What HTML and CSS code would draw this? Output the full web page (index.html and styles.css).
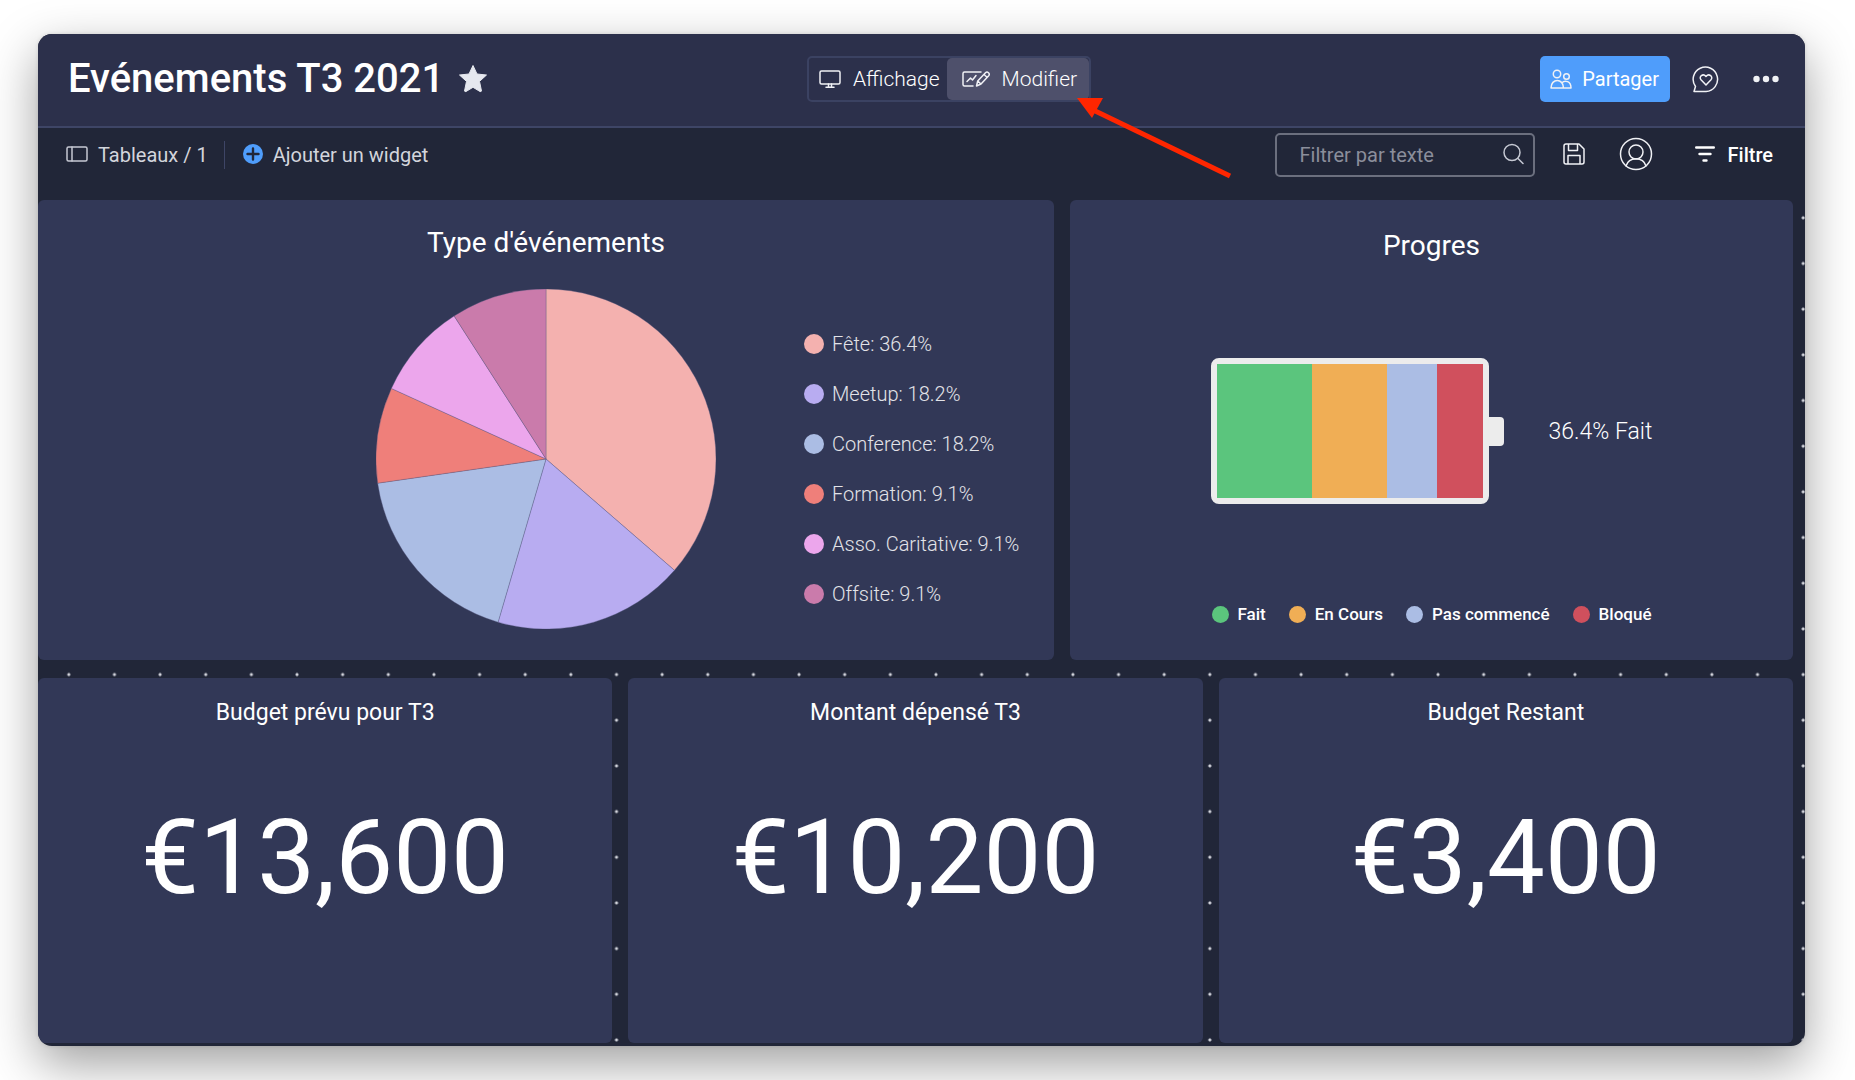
FILE: index.html
```html
<!DOCTYPE html>
<html lang="fr">
<head>
<meta charset="utf-8">
<meta name="viewport" content="width=device-width, initial-scale=1">
<title>Evénements T3 2021</title>
<link rel="stylesheet" href="styles.css">
</head>
<body>
<div class="window">
  <header class="header">
    <div class="heading">
      <h1 class="title">Evénements T3 2021</h1>
      <button class="icon-button" type="button" aria-label="Favori">
        <svg class="star" viewBox="0 0 30 30" width="30" height="30"><path d="M15 1.500l4 8.500 9.500 1-7 6.400 2 9.600q-.5 1-1.500.5l-7-4.200-7 4.200q-1 .5-1.500-.5l2-9.600-7-6.400L11 10z" stroke="#e6e8ef" stroke-linejoin="round"/></svg>
      </button>
    </div>
    <div class="switch">
      <button class="switch-option" type="button">
        <svg class="line-icon" viewBox="0 0 22 20" width="22" height="20"><rect x="1" y="2" width="20" height="13" rx="1.500"/><path d="M9.500 15v2.500M12.500 15v2.500M7 18.200h8"/></svg>
        Affichage
      </button>
      <button class="switch-option is-active" type="button" aria-pressed="true">
        <svg class="line-icon" viewBox="0 0 28 18" width="28" height="18"><path d="M19 2H2.500A1.500 1.500 0 0 0 1 3.500v11A1.500 1.500 0 0 0 2.500 16H11M5 11.500l3.500-3.500 2 2L14 5.500"/><path d="M14.500 16l1.200-5 7.800-8.300a2.200 2.200 0 0 1 3.200 3L19 14zM15.700 11l3.300 3M22 4.500l3 2.800"/></svg>
        Modifier
      </button>
      <svg class="arrow" viewBox="0 0 160 84" width="160" height="84"><path class="arrow-line" d="M14 12L155 80"/><path class="arrow-head" d="M2 2h26L17 22z"/></svg>
    </div>
    <div class="actions">
      <button class="share" type="button">
        <svg class="line-icon" viewBox="0 0 22 20" width="22" height="20"><circle cx="7" cy="5" r="3.700"/><circle cx="16.500" cy="7.500" r="2.800"/><path d="M1 19c0-10 12.500-10 12.500 0zM12 13.700c3-3 9-1.500 9 5.300h-7.500"/></svg>
        Partager
      </button>
      <button class="icon-button" type="button" aria-label="Commentaires">
        <svg class="line-icon" viewBox="0 0 28 28" width="28" height="28"><path d="M2 26.500l1.500-5A12.200 12.200 0 1 1 14 26.500z"/><path d="M14 20l-5-5.200c-2.600-3.200 2-7 5-3.300 3-3.700 7.600.1 5 3.300z"/></svg>
      </button>
      <button class="icon-button" type="button" aria-label="Plus">
        <svg class="solid-icon" viewBox="0 0 26 8" width="26" height="8"><circle cx="3.500" cy="4" r="3.200"/><circle cx="13" cy="4" r="3.200"/><circle cx="22.500" cy="4" r="3.200"/></svg>
      </button>
    </div>
  </header>

  <nav class="toolbar">
    <button class="tool" type="button">
      <svg class="line-icon muted" viewBox="0 0 22 18" width="22" height="18"><rect x="1" y="1" width="20" height="14" rx="1.500"/><path d="M6 1v14"/></svg>
      Tableaux / 1
    </button>
    <button class="tool tool-add" type="button">
      <svg viewBox="0 0 20 22" width="20" height="22"><circle cx="10" cy="10" r="10" fill="#4f9dfb"/><path d="M10 4.500v11M4.500 10h11" stroke="#212638" stroke-width="2.400" stroke-linecap="round"/></svg>
      Ajouter un widget
    </button>
    <div class="search">
      <input class="search-input" type="text" placeholder="Filtrer par texte" aria-label="Filtrer par texte">
      <svg class="line-icon muted" viewBox="0 0 22 24" width="22" height="24"><circle cx="10" cy="9.500" r="8"/><path d="M16 15.500l5 5"/></svg>
    </div>
    <div class="tools-end">
      <button class="icon-button" type="button" aria-label="Enregistrer">
        <svg class="line-icon" viewBox="0 0 22 24" width="22" height="24"><path d="M1 3a2 2 0 0 1 2-2h13l5 5v13a2 2 0 0 1-2 2H3a2 2 0 0 1-2-2zM5.500 1v6.500h9V1M5 21v-8.500h12V21"/></svg>
      </button>
      <button class="icon-button" type="button" aria-label="Profil">
        <svg class="line-icon" viewBox="0 0 34 36" width="34" height="36"><circle cx="17" cy="17" r="15.500"/><circle cx="17" cy="15" r="7"/><path d="M7 29c1.500-5 5-7.300 10-7.300S25.500 24 27 29"/></svg>
      </button>
      <button class="filter" type="button">
        <svg class="filter-icon" viewBox="0 0 20 18" width="20" height="18"><path d="M1.200 1.500h17.600M4.500 8h11M8.500 14.500h3"/></svg>
        Filtre
      </button>
    </div>
  </nav>

  <main class="board">
    <section class="row row-charts">
      <article class="card chart-card">
        <h2 class="card-title">Type d'événements</h2>
        <div class="pie-layout">
          <svg class="pie" viewBox="-171 -171 342 342" width="340" height="340" role="img" aria-label="Type d'événements">
            <path fill="#f4b1af" d="M0 0V-171A171 171 0 0 1 129.200 112z"/>
            <path fill="#b8acf1" d="M0 0L129.200 112A171 171 0 0 1 -48.200 164.100z"/>
            <path fill="#abbde4" d="M0 0L-48.200 164.100A171 171 0 0 1 -169.300 24.300z"/>
            <path fill="#ef7f7a" d="M0 0L-169.300 24.300A171 171 0 0 1 -155.500 -71z"/>
            <path fill="#eca6ec" d="M0 0L-155.500 -71A171 171 0 0 1 -92.400 -143.900z"/>
            <path fill="#ca7bab" d="M0 0L-92.400 -143.900A171 171 0 0 1 0 -171z"/>
          </svg>
          <ul class="pie-legend">
            <li><i class="dot pink"></i>Fête: 36.4%</li>
            <li><i class="dot violet"></i>Meetup: 18.2%</li>
            <li><i class="dot blue"></i>Conference: 18.2%</li>
            <li><i class="dot coral"></i>Formation: 9.1%</li>
            <li><i class="dot orchid"></i>Asso. Caritative: 9.1%</li>
            <li><i class="dot plum"></i>Offsite: 9.1%</li>
          </ul>
        </div>
      </article>
      <article class="card progress-card">
        <h2 class="card-title">Progres</h2>
        <div class="battery-layout">
          <div class="battery">
            <div class="battery-body">
              <div class="cell green" style="flex-grow:95"></div>
              <div class="cell orange" style="flex-grow:75"></div>
              <div class="cell blue" style="flex-grow:50"></div>
              <div class="cell red" style="flex-grow:45"></div>
            </div>
            <div class="battery-cap"></div>
          </div>
          <p class="battery-value">36.4% Fait</p>
        </div>
        <ul class="battery-legend">
          <li><i class="dot green"></i>Fait</li>
          <li><i class="dot orange"></i>En Cours</li>
          <li><i class="dot blue"></i>Pas commencé</li>
          <li><i class="dot red"></i>Bloqué</li>
        </ul>
      </article>
    </section>
    <section class="row row-numbers">
      <article class="card number-card">
        <h2 class="number-title">Budget prévu pour T3</h2>
        <p class="number">€13,600</p>
      </article>
      <article class="card number-card">
        <h2 class="number-title">Montant dépensé T3</h2>
        <p class="number">€10,200</p>
      </article>
      <article class="card number-card">
        <h2 class="number-title">Budget Restant</h2>
        <p class="number">€3,400</p>
      </article>
    </section>
  </main>
</div>
</body>
</html>
```
FILE: styles.css
```css
* { box-sizing: border-box; }

body {
  margin: 0;
  min-height: 100vh;
  padding: 34px 50px 34px 38px;
  display: flex;
  background: #fff;
  color: #fff;
  font-family: Roboto, "Liberation Sans", sans-serif;
}

h1, h2, p, ul { margin: 0; padding: 0; }
ul { list-style: none; }
svg { display: block; flex: none; }

button {
  margin: 0;
  padding: 0;
  border: 0;
  background: none;
  color: inherit;
  font: inherit;
  display: flex;
  align-items: center;
  cursor: pointer;
}

.window {
  flex: 1;
  min-width: 0;
  display: flex;
  flex-direction: column;
  overflow: hidden;
  border-radius: 14px;
  background: #212638;
  box-shadow: 0 18px 50px rgba(0, 0, 0, 0.38), 0 0 4px rgba(0, 0, 0, 0.12);
}

.line-icon {
  fill: none;
  stroke: #f0f1f5;
  stroke-width: 1.5px;
  stroke-linecap: round;
  stroke-linejoin: round;
}
.line-icon.muted { stroke: #c6c9d3; }
.solid-icon { fill: #f0f1f5; }

/* Header */
.header {
  display: grid;
  grid-template-columns: 769fr auto 714fr;
  align-items: center;
  height: 94px;
  padding-bottom: 2px;
  border-bottom: 2px solid #3e4566;
  background: #2c304b;
}
.heading { display: flex; align-items: center; gap: 14px; padding-left: 30px; }
.title { font-size: 40px; line-height: 48px; font-weight: 500; white-space: nowrap; }
.star { fill: #e6e8ef; }

.switch {
  position: relative;
  display: flex;
  height: 46px;
  border: 2px solid #3b4262;
  border-radius: 5px;
  font-size: 21px;
  font-weight: 300;
}
.switch-option { gap: 12px; padding: 0 7px 0 10px; }
.switch-option.is-active { padding: 0 12px 0 15px; border-radius: 5px; background: #4e506b; }
.arrow { position: absolute; left: 266px; top: 38px; z-index: 1; pointer-events: none; }
.arrow-line { stroke: #ff2600; stroke-width: 5px; }
.arrow-head { fill: #ff2600; }

.actions { display: flex; align-items: center; justify-content: flex-end; padding-right: 26px; }
.share {
  height: 46px;
  margin-right: 22px;
  padding: 0 11px 0 10px;
  gap: 10px;
  border-radius: 5px;
  background: #4f9dfb;
  font-size: 20px;
}
.actions .icon-button + .icon-button { margin-left: 33px; }

/* Toolbar */
.toolbar { display: flex; align-items: center; height: 54px; padding: 0 32px 0 28px; }
.tool { gap: 10px; font-size: 20px; font-weight: 400; color: #d3d5dc; white-space: nowrap; }
.tool-add { height: 28px; margin-left: 16px; padding-left: 18px; border-left: 1px solid #3e4566; }
.search {
  display: flex;
  align-items: center;
  width: 260px;
  height: 44px;
  margin-left: auto;
  padding: 0 9px 0 23px;
  border: 2px solid #6b6f7e;
  border-radius: 5px;
}
.search-input {
  flex: 1;
  min-width: 0;
  padding: 0;
  border: 0;
  outline: 0;
  background: none;
  color: #fff;
  font: 400 20px/24px Roboto, "Liberation Sans", sans-serif;
}
.search-input::placeholder { color: #8b8e9b; opacity: 1; }
.tools-end { display: flex; align-items: center; gap: 34px; padding-left: 28px; }
.filter { gap: 13px; margin-left: 8px; font-size: 20px; font-weight: 500; }
.filter-icon { stroke: #fff; stroke-width: 2.4px; stroke-linecap: round; }

/* Board with dotted grid */
.board {
  position: relative;
  flex: 1;
  display: flex;
  flex-direction: column;
  gap: 18px;
  padding: 18px 12px 3px 0;
}
.board::before {
  content: "";
  position: absolute;
  inset: 13px -21px -17px 8px;
  background: radial-gradient(circle, #d5d7df 1px, transparent 2px) 0 0 / 46px 46px round;
}
.row { position: relative; display: grid; }
.row-charts { flex: none; grid-template-columns: 1016fr 723fr; gap: 16px; }
.row-numbers { flex: 1 1 auto; grid-template-columns: repeat(3, 1fr); gap: 16px; }
.card { border-radius: 6px; background: #323857; }
.card-title { font-size: 28px; line-height: 36px; font-weight: 400; text-align: center; }

.dot { flex: none; border-radius: 50%; }
.pink { background: #f4b1af; }
.violet { background: #b8acf1; }
.blue { background: #abbde4; }
.coral { background: #ef7f7a; }
.orchid { background: #eca6ec; }
.plum { background: #ca7bab; }
.green { background: #5bc57d; }
.orange { background: #f0ae55; }
.red { background: #d0505d; }

.chart-card { padding: 25px 0 31px; }
.pie-layout {
  display: grid;
  grid-template-columns: 1fr auto 1fr;
  align-items: center;
  padding-top: 28px;
}
.pie { grid-column: 2; }
.pie path { stroke: rgba(90, 90, 130, 0.35); stroke-width: 1px; }
.pie-legend { padding: 20px 0 0 88px; color: #e2e3e8; font-size: 20px; font-weight: 300; line-height: 50px; }
.pie-legend li { display: flex; align-items: center; gap: 8px; white-space: nowrap; }
.pie-legend .dot { width: 20px; height: 20px; }

.progress-card { display: flex; flex-direction: column; align-items: center; justify-content: space-between; padding: 28px 0 34px; }
.battery-layout { display: flex; align-items: center; gap: 45px; padding-bottom: 4px; }
.battery { display: flex; align-items: center; }
.battery-body {
  display: flex;
  width: 278px;
  height: 146px;
  border: 6px solid #ececec;
  border-radius: 8px;
  background: #ececec;
}
.cell { flex: 1 1 0; }
.battery-cap { width: 15px; height: 29px; border-radius: 0 4px 4px 0; background: #ececec; }
.battery-value { font-size: 23px; font-weight: 300; }
.battery-legend { display: flex; gap: 23px; font-size: 17px; line-height: 24px; font-weight: 500; }
.battery-legend li { display: flex; align-items: center; gap: 9px; }
.battery-legend .dot { width: 17px; height: 17px; }

.number-card { padding: 20px 0 92px; text-align: center; }
.number-title { font-size: 23px; line-height: 30px; font-weight: 400; }
.number { padding-top: 66px; font-size: 103px; line-height: 128px; }
```
